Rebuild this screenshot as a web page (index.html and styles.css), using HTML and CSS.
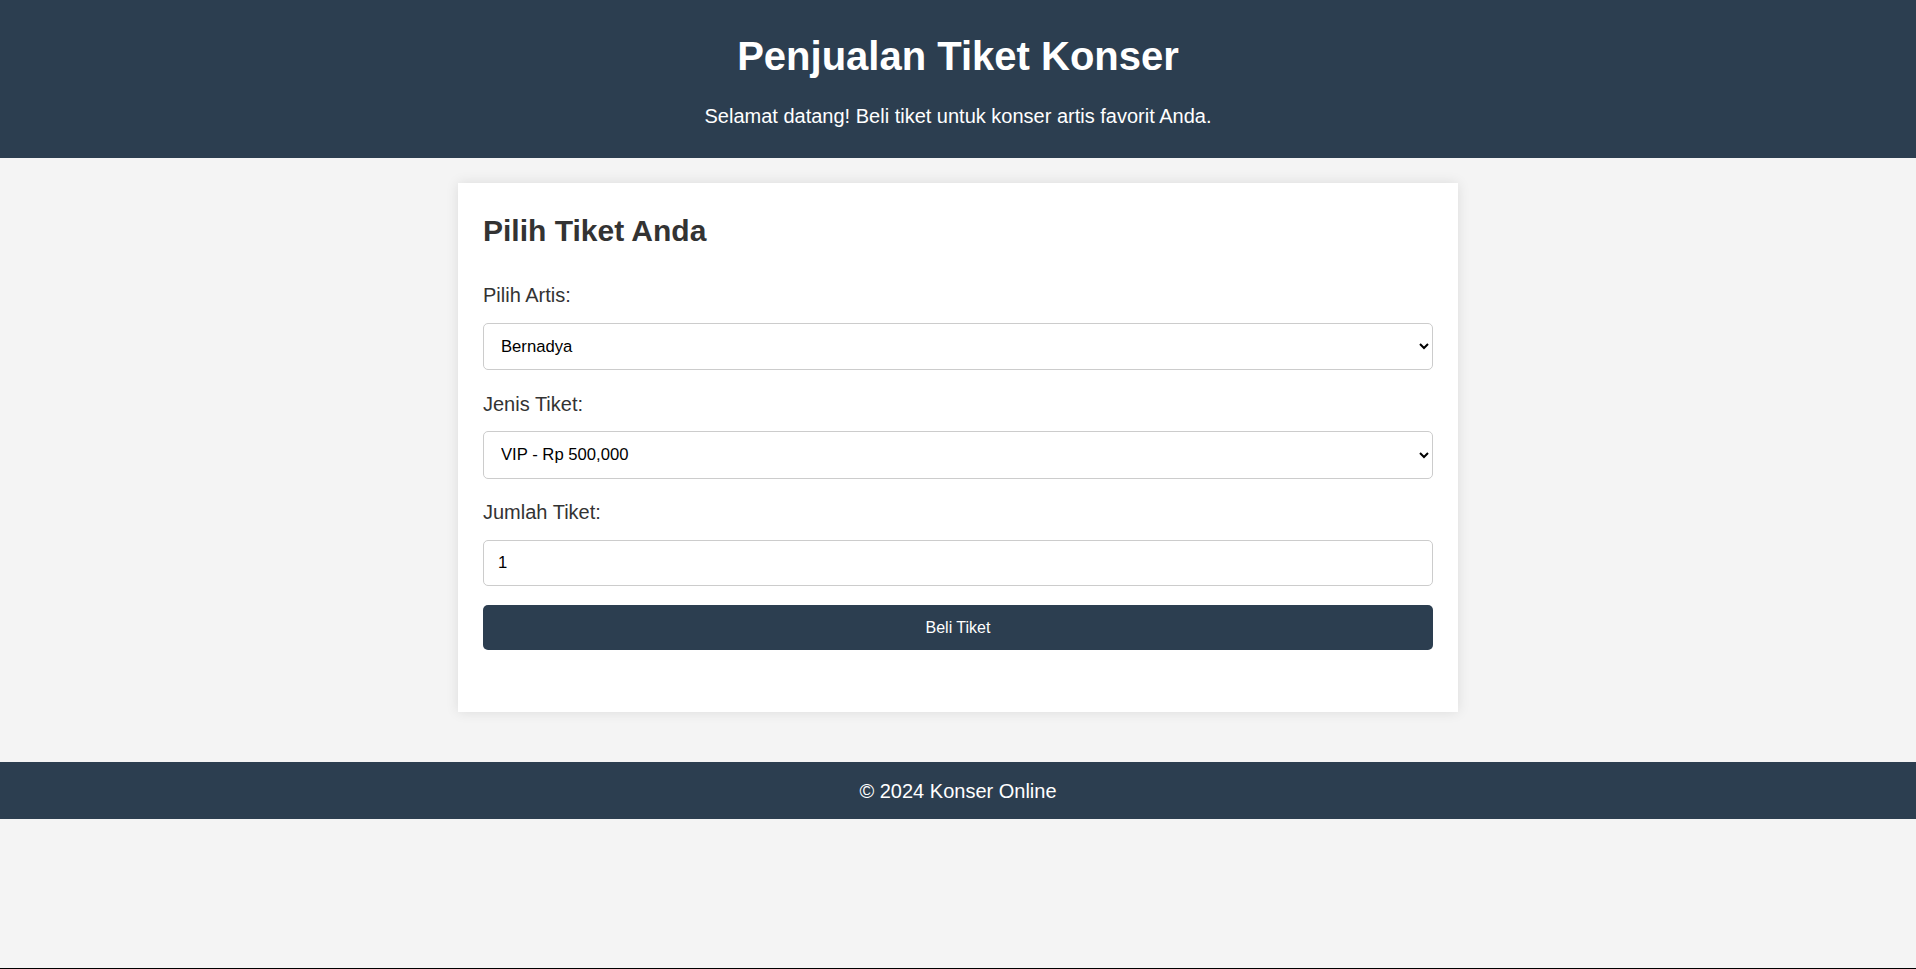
FILE: index.html
```html
<!DOCTYPE html>
<html lang="id">
<head>
<meta charset="utf-8">
<title>Penjualan Tiket Konser</title>
<link rel="stylesheet" href="styles.css">
</head>
<body>
<header class="site-header">
  <h1 class="site-title">Penjualan Tiket Konser</h1>
  <p class="site-subtitle">Selamat datang! Beli tiket untuk konser artis favorit Anda.</p>
</header>
<main class="card">
  <h2 class="card-title">Pilih Tiket Anda</h2>
  <form class="ticket-form">
    <label class="field-label" for="artis">Pilih Artis:</label>
    <select class="field-control field-select" id="artis">
      <option>Bernadya</option>
    </select>
    <label class="field-label" for="jenis">Jenis Tiket:</label>
    <select class="field-control field-select" id="jenis">
      <option>VIP - Rp 500,000</option>
    </select>
    <label class="field-label" for="jumlah">Jumlah Tiket:</label>
    <input class="field-control field-input" id="jumlah" type="text" value="1">
    <button class="buy-button" type="button">Beli Tiket</button>
  </form>
</main>
<footer class="site-footer">&copy; 2024 Konser Online</footer>
</body>
</html>
```

FILE: styles.css
```css
html, body {
  margin: 0;
  padding: 0;
}
body {
  font-family: "Liberation Sans", Arial, sans-serif;
  background: #f4f4f4;
  color: #333;
  min-height: 100vh;
  box-sizing: border-box;
  border-bottom: 1px solid #000;
  display: flex;
  flex-direction: column;
}
.site-header {
  background: #2c3e50;
  color: #fff;
  text-align: center;
  padding: 33px 20px 30px;
  height: 158px;
  box-sizing: border-box;
}
.site-title {
  margin: 0 0 26px;
  font-size: 40px;
  line-height: 46px;
  font-weight: bold;
}
.site-subtitle {
  margin: 0;
  font-size: 20px;
  line-height: 23px;
}
.card {
  width: 1000px;
  box-sizing: border-box;
  margin: 25px auto 0;
  background: #fff;
  box-shadow: 0 0 12px rgba(0, 0, 0, 0.1);
  padding: 30px 25px 62px;
}
.card-title {
  margin: 0 0 36px;
  font-size: 30px;
  line-height: 35px;
  font-weight: bold;
  color: #333;
}
.ticket-form {
  display: flex;
  flex-direction: column;
}
.field-label {
  font-size: 20px;
  line-height: 23px;
  color: #333;
  margin-bottom: 15.5px;
}
.field-control {
  box-sizing: border-box;
  width: 100%;
  border: 1.25px solid #ccc;
  border-radius: 5px;
  background: #fff;
  color: #000;
  font-family: "Liberation Sans", Arial, sans-serif;
  font-size: 16.67px;
  margin: 0 0 22.5px;
}
.field-select {
  height: 47.5px;
  padding: 0 10px 0 13px;
}
.field-input {
  height: 46.5px;
  padding: 0 14px;
  margin-bottom: 19.3px;
}
.buy-button {
  height: 45px;
  width: 100%;
  border: none;
  border-radius: 5px;
  background: #2c3e50;
  color: #fff;
  font-family: "Liberation Sans", Arial, sans-serif;
  font-size: 16px;
  cursor: pointer;
}
.site-footer {
  margin-top: 50px;
  background: #2c3e50;
  color: #fff;
  text-align: center;
  font-size: 20px;
  line-height: 23px;
  height: 57px;
  box-sizing: border-box;
  padding-top: 18px;
}
```
